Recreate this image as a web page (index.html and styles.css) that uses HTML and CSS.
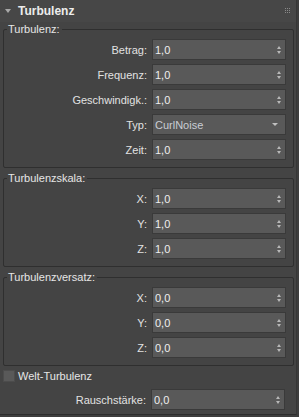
FILE: index.html
```html
<!DOCTYPE html>
<html lang="de">
<head>
    <meta charset="UTF-8">
    <meta name="viewport" content="width=device-width, initial-scale=1.0">
    <title>Turbulenz</title>
    <link rel="stylesheet" href="styles.css">
</head>
<body>
    <div class="rollout">
        <!-- Rollout title bar -->
        <div class="rollout-head">
            <span class="caret"></span>
            <span class="head-title">Turbulenz</span>
            <svg class="grip" width="6" height="6" viewBox="0 0 6 6">
                <rect x="0" y="0" width="1" height="1"/><rect x="2" y="0" width="1" height="1"/><rect x="4" y="0" width="1" height="1"/>
                <rect x="0" y="2" width="1" height="1"/><rect x="2" y="2" width="1" height="1"/><rect x="4" y="2" width="1" height="1"/>
                <rect x="0" y="4" width="1" height="1"/><rect x="2" y="4" width="1" height="1"/><rect x="4" y="4" width="1" height="1"/>
            </svg>
        </div>

        <div class="rollout-body">
            <fieldset class="group">
                <legend>Turbulenz:</legend>
                <div class="row"><label>Betrag:</label><div class="spinner"><span>1,0</span><i class="arrows"></i></div></div>
                <div class="row"><label>Frequenz:</label><div class="spinner"><span>1,0</span><i class="arrows"></i></div></div>
                <div class="row"><label>Geschwindigk.:</label><div class="spinner"><span>1,0</span><i class="arrows"></i></div></div>
                <div class="row"><label>Typ:</label><div class="spinner dropdown"><span>CurlNoise</span><i class="drop"></i></div></div>
                <div class="row"><label>Zeit:</label><div class="spinner"><span>1,0</span><i class="arrows"></i></div></div>
            </fieldset>

            <fieldset class="group">
                <legend>Turbulenzskala:</legend>
                <div class="row"><label>X:</label><div class="spinner"><span>1,0</span><i class="arrows"></i></div></div>
                <div class="row"><label>Y:</label><div class="spinner"><span>1,0</span><i class="arrows"></i></div></div>
                <div class="row"><label>Z:</label><div class="spinner"><span>1,0</span><i class="arrows"></i></div></div>
            </fieldset>

            <fieldset class="group">
                <legend>Turbulenzversatz:</legend>
                <div class="row"><label>X:</label><div class="spinner"><span>0,0</span><i class="arrows"></i></div></div>
                <div class="row"><label>Y:</label><div class="spinner"><span>0,0</span><i class="arrows"></i></div></div>
                <div class="row"><label>Z:</label><div class="spinner"><span>0,0</span><i class="arrows"></i></div></div>
            </fieldset>

            <div class="check-row"><span class="checkbox"></span>Welt-Turbulenz</div>
            <div class="row loose"><label>Rauschstärke:</label><div class="spinner"><span>0,0</span><i class="arrows"></i></div></div>
        </div>
    </div>
</body>
</html>
```
FILE: styles.css
```css
body {
    margin: 0;
    background-color: #3d3d3d;
    font-family: "Liberation Sans", Arial, sans-serif;
    font-size: 11px;
    color: #e2e2e2;
}
.rollout {
    width: 296px;
    background-color: #444444;
    border-right: 1px solid #363636;
    border-bottom: 1px solid #2c2c2c;
}
.rollout-head {
    height: 22px;
    display: flex;
    align-items: center;
    background-color: #474747;
    position: relative;
}
.caret {
    width: 0;
    height: 0;
    margin: 0 7px 0 5px;
    border-left: 3px solid transparent;
    border-right: 3px solid transparent;
    border-top: 4px solid #a8a8a8;
}
.head-title {
    font-size: 12px;
    font-weight: bold;
    color: #ececec;
}
.grip {
    position: absolute;
    left: 285px;
    top: 8px;
    fill: #8a8a8a;
}
.rollout-body {
    padding: 0 2px 4px 3px;
}
.group {
    margin: 0 0 3px 0;
    padding: 3px 7px 7px 0;
    border: 1px solid #2f2f2f;
    border-radius: 2px;
    display: flex;
    flex-direction: column;
    gap: 4px;
}
.group legend {
    margin-left: 3px;
    padding: 0 2px 0 1px;
    line-height: 14px;
    color: #e6e6e6;
}
.row {
    display: grid;
    grid-template-columns: 1fr 134px;
    column-gap: 5px;
    align-items: center;
}
.row label {
    text-align: right;
}
.row.loose {
    padding-right: 9px;
    margin-top: 7px;
}
.spinner {
    height: 19px;
    display: flex;
    align-items: center;
    justify-content: space-between;
    padding: 0 3px 0 2px;
    background-color: #595959;
    border: 1px solid #3a3a3a;
    color: #eeeeee;
}
.dropdown span {
    color: #c9cdd4;
}
.arrows {
    width: 5px;
    height: 8px;
    position: relative;
}
.arrows::before, .arrows::after {
    content: "";
    position: absolute;
    left: 0;
    border-left: 2.5px solid transparent;
    border-right: 2.5px solid transparent;
}
.arrows::before {
    top: 0;
    border-bottom: 3px solid #b8b8b8;
}
.arrows::after {
    bottom: 0;
    border-top: 3px solid #b8b8b8;
}
.drop {
    width: 0;
    height: 0;
    margin-right: 4px;
    border-left: 3px solid transparent;
    border-right: 3px solid transparent;
    border-top: 3px solid #c0c0c0;
}
.check-row {
    display: flex;
    align-items: center;
    gap: 3px;
    margin-top: 4px;
    color: #e6e6e6;
}
.checkbox {
    width: 10px;
    height: 10px;
    background-color: #595959;
    border: 1px solid #4c4c4c;
}
```
